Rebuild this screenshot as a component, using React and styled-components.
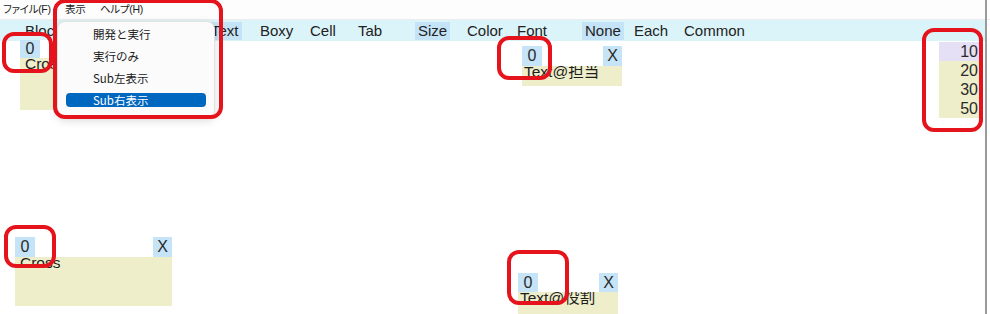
import React from "react";
import styled, { createGlobalStyle } from "styled-components";

const GlobalStyle = createGlobalStyle`
  html, body { margin: 0; padding: 0; background: #ffffff; overflow: hidden; }
  * { box-sizing: border-box; }
`;

const LATIN = `"Liberation Sans", "Noto Sans CJK JP", sans-serif`;
const JP = `"Noto Sans CJK JP", "Liberation Sans", sans-serif`;

const Window = styled.div`
  position: relative;
  width: 990px;
  height: 314px;
  overflow: hidden;
  display: flex;
  flex-direction: column;
  background: #ffffff;
`;

const MenuBar = styled.div`
  height: 20px;
  display: flex;
  align-items: center;
  padding-left: 3px;
  background: #fdfdfd;
  border-bottom: 1px solid #ececec;
  font-family: ${LATIN};
  font-feature-settings: "palt";
  font-size: 10.5px;
  letter-spacing: -0.3px;
  color: #1b1b1b;
`;

const MenuItem = styled.span`
  width: ${(p) => p.$w}px;
  flex: none;
  line-height: 19px;
  white-space: nowrap;
`;

const Toolbar = styled.div`
  height: 21px;
  width: 985px;
  display: flex;
  align-items: center;
  padding-left: 22px;
  background: #dbf4fa;
  font-family: ${LATIN};
  font-size: 15px;
  color: #222;
`;

const ToolItem = styled.div`
  width: ${(p) => p.$w}px;
  flex: none;
  display: flex;
`;

const ToolLabel = styled.span`
  height: 18px;
  line-height: 18px;
  padding: 0 3px;
  background: ${(p) => (p.$on ? "#c4e3f6" : "transparent")};
  white-space: nowrap;
`;

const Canvas = styled.div`
  position: relative;
  flex: 1;
`;

const Widget = styled.div`
  position: absolute;
  left: ${(p) => p.$x}px;
  top: ${(p) => p.$y}px;
  width: ${(p) => p.$w}px;
  display: flex;
  flex-direction: column;
`;

const Head = styled.div`
  position: relative;
  z-index: 1;
  height: ${(p) => p.$h}px;
  display: flex;
  justify-content: space-between;
  background: #ffffff;
`;

const Tag = styled.span`
  width: ${(p) => p.$w || 20}px;
  height: 100%;
  display: flex;
  align-items: center;
  justify-content: center;
  background: #c6e4f7;
  font-family: ${LATIN};
  font-size: 16px;
  color: #2a2a2a;
`;

const Body = styled.div`
  height: ${(p) => p.$h}px;
  background: #eeeecb;
  font-family: ${LATIN};
  font-size: 15.5px;
  color: #1e1e1e;
  padding-left: ${(p) => p.$pl || 5}px;
`;

const BodyText = styled.div`
  margin-top: -4px;
  line-height: 20px;
  white-space: nowrap;
`;

const List = styled.div`
  position: absolute;
  left: 939px;
  top: 1px;
  width: 41px;
  display: flex;
  flex-direction: column;
`;

const ListRow = styled.div`
  height: 19px;
  line-height: 19px;
  text-align: right;
  padding-right: 2px;
  background: ${(p) => (p.$sel ? "#e5e0f6" : "#eeeecb")};
  font-family: ${LATIN};
  font-size: 16px;
  color: #2a2a2a;
`;

const Dropdown = styled.div`
  position: absolute;
  left: 57px;
  top: 21px;
  width: 158px;
  padding: 5px 0 10px;
  display: flex;
  flex-direction: column;
  gap: 8px;
  background: #fbfbfb;
  border: 1px solid #e2e2e2;
  border-radius: 8px;
  box-shadow: 0 3px 8px rgba(0, 0, 0, 0.14);
  font-family: ${JP};
  font-size: 11.5px;
  z-index: 5;
`;

const DropItem = styled.div`
  margin: 0 8px;
  height: 14px;
  line-height: 14px;
  padding-left: 27px;
  border-radius: 4px;
  white-space: nowrap;
  background: ${(p) => (p.$on ? "#0067c0" : "transparent")};
  color: ${(p) => (p.$on ? "#ffffff" : "#1a1a1a")};
`;

const Mark = styled.div`
  position: absolute;
  left: ${(p) => p.$x}px;
  top: ${(p) => p.$y}px;
  width: ${(p) => p.$w}px;
  height: ${(p) => p.$h}px;
  border: 4px solid #e5141c;
  border-radius: 12px;
  z-index: 10;
  pointer-events: none;
`;

const EdgeLine = styled.div`
  position: absolute;
  left: 985px;
  top: 0;
  width: 2px;
  height: 314px;
  background: #9a9a9a;
  z-index: 4;
`;

const tools = [
  { t: "Block", w: 90 },
  { t: "Line", w: 96 },
  { t: "Text", w: 49, on: true },
  { t: "Boxy", w: 50 },
  { t: "Cell", w: 48 },
  { t: "Tab", w: 60 },
  { t: "Size", w: 49, on: true },
  { t: "Color", w: 50 },
  { t: "Font", w: 68 },
  { t: "None", w: 49, on: true },
  { t: "Each", w: 50 },
  { t: "Common", w: 80 },
];

const menuItems = ["開発と実行", "実行のみ", "Sub左表示", "Sub右表示"];

const widgets = [
  { x: 20, y: -1, w: 157, hh: 18, bh: 52, text: "Cross", x2: false },
  { x: 15, y: 196, w: 157, hh: 20, bh: 49, text: "Cross", x2: true },
  { x: 522, y: 5, w: 100, hh: 20, bh: 20, text: "Text@担当", x2: true, pl: 2 },
  { x: 518, y: 232, w: 100, hh: 19, bh: 24, text: "Text@役割", x2: true, pl: 2 },
];

export default function App() {
  return (
    <>
      <GlobalStyle />
      <Window>
        <MenuBar>
          <MenuItem $w={62}>ファイル(F)</MenuItem>
          <MenuItem $w={35}>表示</MenuItem>
          <MenuItem $w={60}>ヘルプ(H)</MenuItem>
        </MenuBar>
        <Toolbar>
          {tools.map((t) => (
            <ToolItem key={t.t} $w={t.w}>
              <ToolLabel $on={t.on}>{t.t}</ToolLabel>
            </ToolItem>
          ))}
        </Toolbar>
        <Canvas>
          {widgets.map((w, i) => (
            <Widget key={i} $x={w.x} $y={w.y} $w={w.w}>
              <Head $h={w.hh}>
                <Tag>0</Tag>
                {w.x2 && <Tag $w={19}>X</Tag>}
              </Head>
              <Body $h={w.bh} $pl={w.pl}>
                <BodyText>{w.text}</BodyText>
              </Body>
            </Widget>
          ))}
          <List>
            <ListRow $sel>10</ListRow>
            <ListRow>20</ListRow>
            <ListRow>30</ListRow>
            <ListRow>50</ListRow>
          </List>
        </Canvas>
        <Dropdown>
          {menuItems.map((m, i) => (
            <DropItem key={m} $on={i === 3}>
              {m}
            </DropItem>
          ))}
        </Dropdown>
        <EdgeLine />
        <Mark $x={53} $y={-1} $w={170} $h={120} />
        <Mark $x={2} $y={32} $w={51} $h={41} />
        <Mark $x={497} $y={36} $w={55} $h={44} />
        <Mark $x={922} $y={28} $w={61} $h={104} />
        <Mark $x={4} $y={225} $w={52} $h={43} />
        <Mark $x={507} $y={250} $w={62} $h={55} />
      </Window>
    </>
  );
}
